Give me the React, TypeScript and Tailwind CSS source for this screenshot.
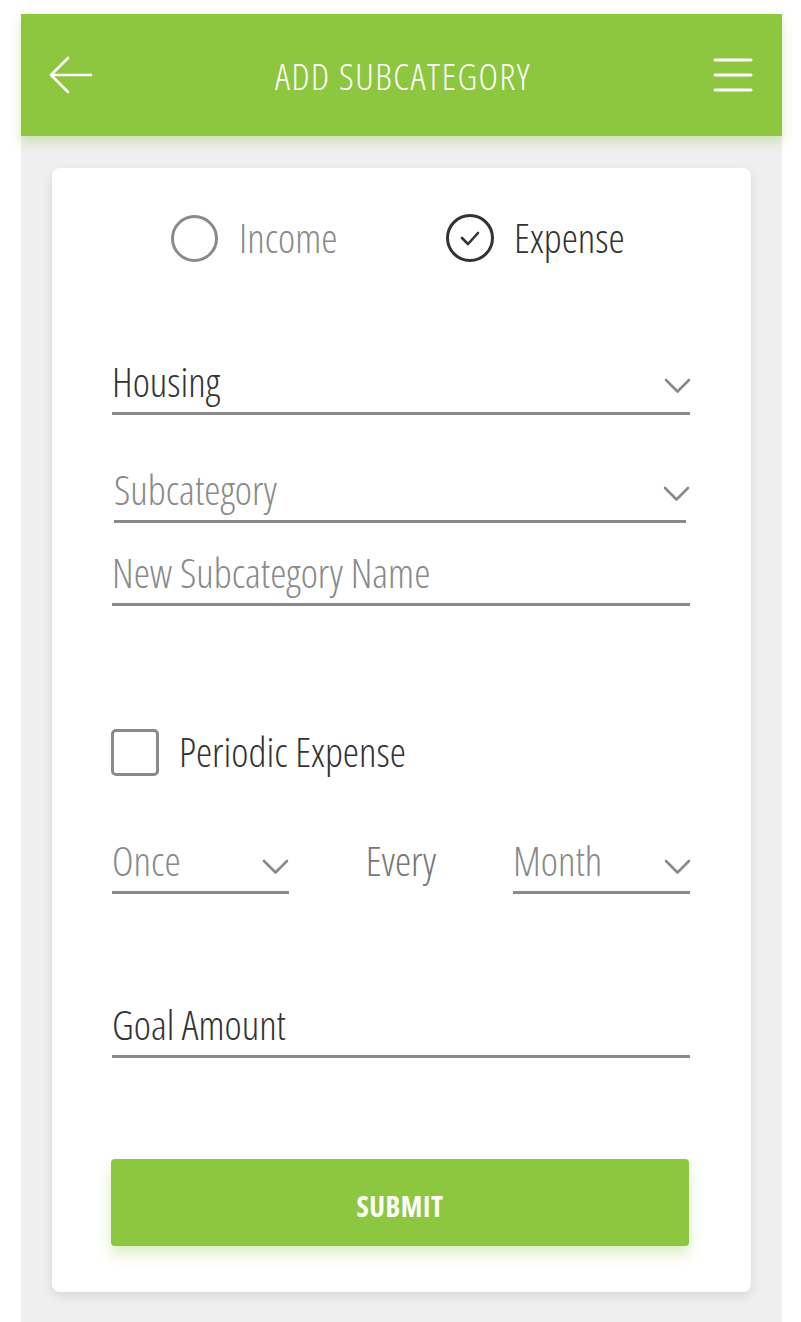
import React from 'react';

const Chevron: React.FC<{ className?: string }> = ({ className }) => (
  <svg className={className} width="27" height="16" viewBox="0 0 27 16" fill="none" stroke="#8a8a8a" strokeWidth={2.6} strokeLinecap="round" strokeLinejoin="round">
    <path d="M2 2l11.5 11.5L25 2" />
  </svg>
);

const App: React.FC = () => {
  return (
    <div className="w-[801px] h-[1322px] bg-white pt-[14px] pl-[21px] font-['Open_Sans',sans-serif] font-stretch-[75%] font-light">
      <div className="w-[761px] h-[1308px] bg-[#efefef] flex flex-col">
        <header className="h-[122px] bg-[#8dc63f] flex items-center justify-between pl-[28px] pr-[29px] shadow-[0_6px_10px_rgba(141,198,63,0.35)] relative">
          <svg width="44" height="38" viewBox="0 0 44 38" fill="none" stroke="white" strokeWidth={2.6} strokeLinecap="round" strokeLinejoin="round">
            <path d="M19 2L2 19l17 17M2 19h40" />
          </svg>
          <h1 className="text-white text-[37px] tracking-[1.5px] leading-none">ADD SUBCATEGORY</h1>
          <svg width="40" height="36" viewBox="0 0 40 36" fill="none" stroke="white" strokeWidth={3} strokeLinecap="round">
            <path d="M2 3h36M2 18h36M2 33h36" />
          </svg>
        </header>

        <main className="mt-[32px] ml-[31px] w-[699px] h-[1124px] bg-white rounded-lg shadow-[0_4px_12px_rgba(0,0,0,0.1)] pt-[46px] pl-[60px] pr-[61px] text-[41px] leading-none">
          <div className="flex items-center h-[48px] pl-[59px]">
            <div className="flex items-center w-[275px]">
              <span className="w-[47px] h-[47px] rounded-full border-[3px] border-[#8a8a8a]" />
              <span className="ml-[21px] pb-[2px] text-[#8a8a8a]">Income</span>
            </div>
            <div className="flex items-center">
              <span className="w-[48px] h-[48px] rounded-full border-[3px] border-[#333] flex items-center justify-center">
                <svg width="22" height="18" viewBox="0 0 22 18" fill="none" stroke="#333" strokeWidth={2.6} strokeLinecap="round" strokeLinejoin="round">
                  <path d="M3 9l6 6L19 4" />
                </svg>
              </span>
              <span className="ml-[20px] pb-[2px] text-[#333]">Expense</span>
            </div>
          </div>

          <div className="mt-[97px] h-[56px] flex items-end justify-between border-b-[3px] border-[#8a8a8a] pb-[10px]">
            <span className="text-[#333]">Housing</span>
            <Chevron className="mb-[8px] mr-[-1px]" />
          </div>

          <div className="mt-[52px] ml-[2px] mr-[4px] h-[56px] flex items-end justify-between border-b-[3px] border-[#8a8a8a] pb-[10px]">
            <span className="text-[#8a8a8a]">Subcategory</span>
            <Chevron className="mb-[8px] mr-[-4px]" />
          </div>

          <div className="mt-[27px] h-[56px] flex items-end border-b-[3px] border-[#8a8a8a] pb-[10px]">
            <span className="text-[#8a8a8a]">New Subcategory Name</span>
          </div>

          <div className="mt-[123px] flex items-center h-[47px]">
            <span className="w-[48px] h-[47px] -ml-px rounded-[5px] border-[3px] border-[#8a8a8a]" />
            <span className="ml-[20px] pb-[3px] text-[#333]">Periodic Expense</span>
          </div>

          <div className="mt-[62px] grid grid-cols-[177px_1fr_177px] items-end">
            <div className="h-[56px] flex items-end justify-between border-b-[3px] border-[#8a8a8a] pb-[10px]">
              <span className="text-[#8a8a8a]">Once</span>
              <Chevron className="mb-[6px]" />
            </div>
            <span className="text-center text-[#777] pb-[13px]">Every</span>
            <div className="h-[56px] flex items-end justify-between border-b-[3px] border-[#8a8a8a] pb-[10px]">
              <span className="text-[#8a8a8a]">Month</span>
              <Chevron className="mb-[6px] mr-[-1px]" />
            </div>
          </div>

          <div className="mt-[108px] h-[56px] flex items-end border-b-[3px] border-[#8a8a8a] pb-[10px]">
            <span className="text-[#333]">Goal Amount</span>
          </div>

          <button className="mt-[101px] -ml-px w-[578px] h-[87px] pt-[6px] bg-[#8dc63f] rounded-[4px] text-white text-[28px] tracking-[0.5px] font-bold shadow-[0_8px_14px_rgba(141,198,63,0.3)]">
            SUBMIT
          </button>
        </main>
      </div>
    </div>
  );
};

export default App;
